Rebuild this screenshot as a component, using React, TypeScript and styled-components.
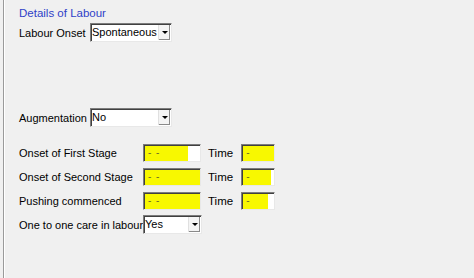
import React from "react";
import styled, { createGlobalStyle } from "styled-components";

const Global = createGlobalStyle`
  html, body { margin: 0; padding: 0; background: #f0f0f0; }
  body { font-family: "Liberation Sans", Arial, sans-serif; font-size: 11px; color: #000; }
`;

const Panel = styled.div`
  width: 474px;
  height: 278px;
  box-sizing: border-box;
  margin-left: 3px;
  border-left: 1px solid #9a9a9a;
  box-shadow: inset 1px 0 0 #ffffff;
  padding: 7px 0 0 15px;
  display: flex;
  flex-direction: column;
`;

const Heading = styled.div`
  color: #2f3fc8;
  font-size: 11.5px;
  line-height: 13px;
  height: 13px;
`;

const Row = styled.div<{ $top?: number }>`
  display: flex;
  align-items: center;
  height: 19px;
  margin-top: ${(p) => p.$top ?? 0}px;
`;

const Label = styled.span<{ $w: number }>`
  width: ${(p) => p.$w}px;
  flex: none;
  white-space: nowrap;
`;

const SelectBox = styled.div<{ $w: number }>`
  width: ${(p) => p.$w}px;
  height: 19px;
  box-sizing: border-box;
  background: #fff;
  border: 1px solid;
  border-color: #7c7c7c #e8e8e8 #e8e8e8 #7c7c7c;
  box-shadow: inset 1px 1px 0 #404040;
  display: flex;
  align-items: stretch;
`;

const SelectText = styled.span`
  flex: 1;
  padding-left: 1px;
  line-height: 17px;
  font-size: 11px;
  white-space: nowrap;
  overflow: hidden;
`;

const ArrowBtn = styled.span`
  width: 11px;
  flex: none;
  margin: 1px 1px 1px 0;
  background: #f4f4f4;
  border-left: 1px solid #e0e0e0;
  box-shadow: inset -1px -1px 0 #8a8a8a;
  display: flex;
  align-items: center;
  justify-content: center;
`;

const Tri = styled.span`
  width: 0;
  height: 0;
  border-left: 3px solid transparent;
  border-right: 3px solid transparent;
  border-top: 3px solid #000;
`;

const Field = styled.div<{ $w: number; $fill: number }>`
  width: ${(p) => p.$w}px;
  height: 18px;
  box-sizing: border-box;
  border: 1px solid;
  border-color: #7c7c7c #e8e8e8 #e8e8e8 #7c7c7c;
  box-shadow: inset 1px 1px 0 #404040;
  background: linear-gradient(
    to right,
    #f8f800 0,
    #f8f800 ${(p) => p.$fill}%,
    #ffffff ${(p) => p.$fill}%
  );
  padding-left: 4px;
  line-height: 16px;
  color: #6a6a2a;
  font-size: 10px;
  letter-spacing: 1px;
`;

const TimeLabel = styled.span`
  margin: 0 8px 0 7px;
  font-size: 11.5px;
`;

function Select({ w, value }: { w: number; value: string }) {
  return (
    <SelectBox $w={w}>
      <SelectText>{value}</SelectText>
      <ArrowBtn>
        <Tri />
      </ArrowBtn>
    </SelectBox>
  );
}

const stages = [
  { label: "Onset of First Stage", fill: 78, tfill: 100 },
  { label: "Onset of Second Stage", fill: 100, tfill: 90 },
  { label: "Pushing commenced", fill: 100, tfill: 80 },
];

export default function App() {
  return (
    <>
      <Global />
      <Panel>
        <Heading>Details of Labour</Heading>
        <Row $top={3}>
          <Label $w={71}>Labour Onset</Label>
          <Select w={82} value="Spontaneous" />
        </Row>
        <Row $top={66}>
          <Label $w={71}>Augmentation</Label>
          <Select w={82} value="No" />
        </Row>
        {stages.map((s, i) => (
          <Row key={s.label} $top={i === 0 ? 16 : 5}>
            <Label $w={124}>{s.label}</Label>
            <Field $w={58} $fill={s.fill}>- -</Field>
            <TimeLabel>Time</TimeLabel>
            <Field $w={34} $fill={s.tfill}>-</Field>
          </Row>
        ))}
        <Row $top={5}>
          <Label $w={124}>One to one care in labour</Label>
          <Select w={59} value="Yes" />
        </Row>
      </Panel>
    </>
  );
}
